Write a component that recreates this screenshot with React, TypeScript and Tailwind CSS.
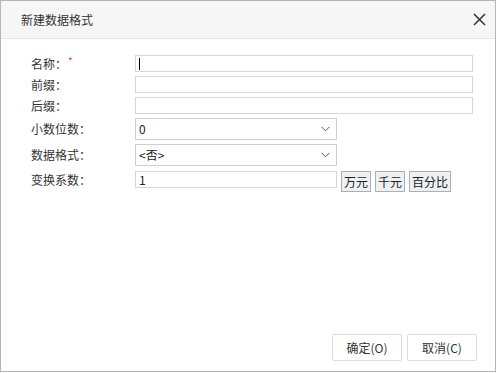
import React from 'react';

const font = { fontFamily: '"Noto Sans CJK SC", "Noto Sans", sans-serif' };

const Chevron = () => (
  <svg width="9" height="6" viewBox="0 0 9 6" className="shrink-0">
    <path d="M0.5 0.8 L4.5 4.8 L8.5 0.8" fill="none" stroke="#555" strokeWidth="1" />
  </svg>
);

const Label = ({ children, required }: { children: React.ReactNode; required?: boolean }) => (
  <div className="flex items-center text-[12px] leading-none text-[#333]">
    <span>{children}</span>
    {required && <span className="ml-[1px] -mt-[5px] text-[10px] text-[#e4393c]">*</span>}
  </div>
);

const TextBox = ({ value, focused, className }: { value?: string; focused?: boolean; className?: string }) => (
  <div
    className={`flex h-[17px] items-center border border-[#d6d6d6] bg-white pl-[3px] text-[12px] leading-none text-[#222] ${className ?? ''}`}
  >
    {focused && <span className="h-[12px] w-[1px] bg-black" />}
    {value}
  </div>
);

const SelectBox = ({ value }: { value: string }) => (
  <div className="flex h-[22px] w-[202px] items-center justify-between border border-[#d0d0d0] bg-white pl-[3px] pr-[6px] text-[12px] leading-none text-[#222]">
    <span>{value}</span>
    <Chevron />
  </div>
);

const UnitButton = ({ children }: { children: React.ReactNode }) => (
  <div className="flex h-[21px] items-center justify-center border border-[#a9b0b8] bg-[#eef0f2] px-[2px] text-[12px] leading-none text-[#222]">
    {children}
  </div>
);

export default function App() {
  const rows = [
    { label: '名称：', required: true, field: <TextBox focused className="w-[338px]" /> },
    { label: '前缀：', field: <TextBox className="w-[338px]" /> },
    { label: '后缀：', field: <TextBox className="w-[338px]" /> },
  ];

  return (
    <div className="h-[373px] w-[498px] bg-white" style={font}>
      <div className="flex h-[372px] w-[496px] flex-col border border-[#b5b5b5] bg-white">
        <div className="flex h-[38px] shrink-0 items-center justify-between border-b border-[#e6e6e6] bg-[#f6f6f6] pl-[20px] pr-[9px]">
          <span className="text-[12px] text-[#333]">新建数据格式</span>
          <svg width="13" height="13" viewBox="0 0 13 13">
            <path d="M1 1 L12 12 M12 1 L1 12" stroke="#333" strokeWidth="1.5" />
          </svg>
        </div>

        <div className="flex flex-1 flex-col pl-[30px] pt-[16px]">
          {rows.map((r, i) => (
            <div key={i} className={`grid grid-cols-[104px_1fr] items-center ${i > 0 ? 'mt-[4px]' : ''}`}>
              <Label required={r.required}>{r.label}</Label>
              {r.field}
            </div>
          ))}
          <div className="mt-[4px] grid grid-cols-[104px_1fr] items-center">
            <Label>小数位数：</Label>
            <SelectBox value="0" />
          </div>
          <div className="mt-[4px] grid grid-cols-[104px_1fr] items-center">
            <Label>数据格式：</Label>
            <SelectBox value="<否>" />
          </div>
          <div className="mt-[5px] grid grid-cols-[104px_1fr] items-start">
            <div className="flex h-[17px] items-center">
              <Label>变换系数：</Label>
            </div>
            <div className="flex items-start gap-[4px]">
              <TextBox value="1" className="w-[202px]" />
              <UnitButton>万元</UnitButton>
              <UnitButton>千元</UnitButton>
              <UnitButton>百分比</UnitButton>
            </div>
          </div>
        </div>

        <div className="flex shrink-0 justify-end gap-[5px] pb-[10px] pr-[18px]">
          <button className="flex h-[27px] w-[70px] items-center justify-center rounded-[2px] border border-[#dcdcdc] bg-white text-[12px] text-[#333]">
            确定(O)
          </button>
          <button className="flex h-[27px] w-[70px] items-center justify-center rounded-[2px] border border-[#dcdcdc] bg-white text-[12px] text-[#333]">
            取消(C)
          </button>
        </div>
      </div>
    </div>
  );
}
